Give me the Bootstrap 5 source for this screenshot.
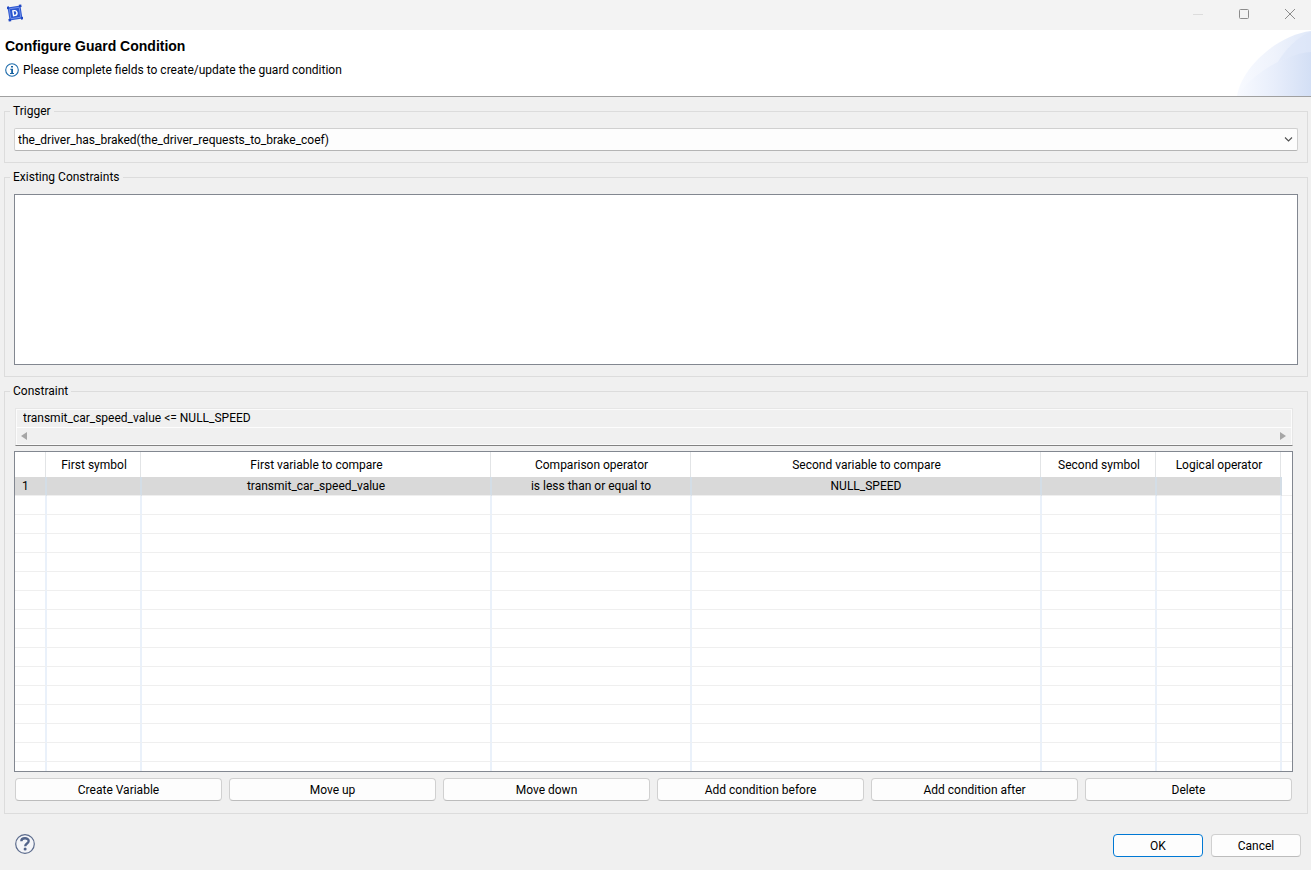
<!DOCTYPE html>
<html lang="en">
<head>
<meta charset="utf-8">
<meta name="viewport" content="width=device-width, initial-scale=1">
<title>Configure Guard Condition</title>
<link href="https://cdn.jsdelivr.net/npm/bootstrap@5.3.0/dist/css/bootstrap.min.css" rel="stylesheet">
<style>
  body { background: #f0f0f0; color: #000; font: 12px/16px Roboto, "Noto Sans", sans-serif; }
  .title-bar { background: #f3f3f3; height: 30px; padding-left: 7px; }
  .win-btn { width: 46px; height: 28px; color: #8c8c8c; }
  .win-btns { margin-right: -2px; }
  .win-btn:disabled { color: #dcdcdc; opacity: 1; border: 0; }
  .banner { background: #fff; height: 67px; border-bottom: 1px solid #a0a0a0; padding: 7px 0 0 5px; }
  .banner h1 { font: bold 14px/18px "Liberation Sans", Arial, sans-serif; margin-bottom: 7px; }
  .swoosh { right: 0; bottom: 0; }
  .main-area { padding-top: 6px; }
  .group-box { border: 1px solid #dcdcdc; margin: 0 3px 6px 4px; padding: 0 9px 11px; min-width: 0; }
  .group-box legend { font-size: 12px; line-height: 16px; padding: 0 3px; margin: 0 0 0 -4px; }
  .group-wide { padding: 0 14px 12px 9px; }
  .combo { height: 23px; border: 1px solid #d0d0d0; border-bottom-color: #b4b4b4; border-radius: 2px; background-color: #fdfdfd; color: #000; font-size: 12px; line-height: 16px; padding: 0 24px 0 3px; margin-top: 9px;
    background-image: url("data:image/svg+xml,%3csvg xmlns='http://www.w3.org/2000/svg' viewBox='0 0 8 5'%3e%3cpath d='M.5.5 4 4 7.5.5' fill='none' stroke='%23505050' stroke-width='1.1'/%3e%3c/svg%3e"); background-position: right 4px center; background-size: 9px 5px; }
  .constraint-list { height: 171px; border: 1px solid #828790; border-radius: 0; resize: none; margin-top: 9px; background: #fff; }
  .expression { margin: 9px 0 5px 1px; border: 1px solid #e6e6e6; border-bottom-color: #828282; box-shadow: inset 0 0 0 1px #fbfbfb; }
  .expression input { height: 19px; border: 0; border-bottom: 1px solid #fdfdfd; border-radius: 0; background: transparent; color: #000; font-size: 12px; line-height: 16px; padding: 0 7px; }
  .scroll-strip { height: 17px; padding: 0 5px 1px 4px; color: #a6a6a6; }
  .grid-frame { border: 1px solid #828790; background: #fff; overflow: auto; }
  .cond-grid { table-layout: fixed; width: 100%; border-collapse: separate; border-spacing: 0; text-align: center; }
  .cond-grid th { height: 25px; padding: 1px 0 0; font-weight: 400; border-right: 1px solid #fff; box-shadow: inset -1px 0 #e2e4e6; }
  .cond-grid td { height: 19px; padding: 0; line-height: 18px; border-right: 2px solid #eaf1fa; border-bottom: 1px solid #efefef; white-space: nowrap; }
  .cond-grid th:last-child, .cond-grid td:last-child { border-right: 0; box-shadow: none; }
  .cond-grid .picked td:not(:last-child) { background: #d9d9d9; border-right-color: #d3dde6; }
  .cond-grid .picked td:first-child { text-align: left; padding-left: 7px; }
  .cond-grid .cut td { height: 9px; border-bottom: 0; }
  .button-row { gap: 7px; margin: 6px 1px 0; }
  .dlg-btn { --bs-btn-color: #000; --bs-btn-bg: #fdfdfd; --bs-btn-border-color: #d0d0d0; --bs-btn-hover-color: #000; --bs-btn-hover-bg: #e5f1fb; --bs-btn-hover-border-color: #0078d4; --bs-btn-border-radius: 4px; --bs-btn-padding-x: 6px; --bs-btn-padding-y: 0px; --bs-btn-font-size: 12px; --bs-btn-line-height: 16px; height: 23px; border-bottom-color: #bcbcbc; }
  .dlg-btn.is-default { border-color: #0078d4; }
  .dlg-footer { padding: 14px 10px 13px 15px; gap: 8px; }
  .dlg-footer .dlg-btn { width: 90px; }
</style>
</head>
<body>
<div class="d-flex flex-column min-vh-100">
  <header>
    <div class="title-bar d-flex align-items-start">
      <svg class="mt-1" width="16" height="18" viewBox="0 -1 16 18" aria-hidden="true">
        <g transform="rotate(-9 8 8)">
          <rect x="1.500" y="1.500" width="13" height="13" fill="#2c56d0"/>
          <rect x="3" y="3" width="10" height="10" fill="none" stroke="#86a3f0" stroke-width=".7"/>
          <g fill="#2048c4"><rect x=".5" y=".5" width="2.500" height="2.500"/><rect x="13" y=".5" width="2.500" height="2.500"/><rect x=".5" y="13" width="2.500" height="2.500"/><rect x="13" y="13" width="2.500" height="2.500"/></g>
          <path d="M6.200 5.600h1.600a2.200 2.400 0 0 1 0 4.800H6.200z" fill="none" stroke="#fff" stroke-width="1.400"/>
        </g>
      </svg>
      <div class="win-btns ms-auto d-flex">
        <button type="button" class="win-btn btn p-0 border-0 rounded-0 d-flex align-items-center justify-content-center" disabled aria-label="Minimize"><svg width="10" height="10" aria-hidden="true"><path d="M0 5.500h10" stroke="currentColor"/></svg></button>
        <button type="button" class="win-btn btn p-0 border-0 rounded-0 d-flex align-items-center justify-content-center" aria-label="Maximize"><svg width="12" height="12" viewBox="0 0 12 12" aria-hidden="true"><rect x="1.500" y="1.500" width="9" height="9" rx="1" fill="none" stroke="currentColor"/></svg></button>
        <button type="button" class="win-btn btn p-0 border-0 rounded-0 d-flex align-items-center justify-content-center" aria-label="Close"><svg width="12" height="12" viewBox="0 0 12 12" aria-hidden="true"><path d="M1 1l10 10M11 1l-10 10" stroke="currentColor"/></svg></button>
      </div>
    </div>
    <div class="banner position-relative">
      <h1>Configure Guard Condition</h1>
      <div class="d-flex align-items-center gap-1">
        <svg width="14" height="14" viewBox="0 0 14 14" aria-hidden="true"><circle cx="7" cy="7" r="6.300" fill="#fff" stroke="#1f6cab" stroke-width="1.100"/><path d="M6 3h2v1.500H6zM5.200 5.700H8v4.200h1v1H5v-1h1.200V6.700h-1z" fill="#14609f"/></svg>
        <span>Please complete fields to create/update the guard condition</span>
      </div>
      <svg class="swoosh position-absolute" width="74" height="66" viewBox="0 0 74 66" aria-hidden="true">
        <defs>
          <linearGradient id="fadeA"><stop offset="0" stop-color="#f8faff"/><stop offset=".5" stop-color="#eff3fc"/><stop offset="1" stop-color="#dfe8f9"/></linearGradient>
          <linearGradient id="fadeB"><stop offset="0" stop-color="#f8faff"/><stop offset=".5" stop-color="#e8eefb"/><stop offset="1" stop-color="#d3dff5"/></linearGradient>
        </defs>
        <path d="M0 66C4 38 40 5 74 1V66z" fill="url(#fadeA)"/>
        <path d="M41 32C48 20 60 7 74 2V22Q56 24 41 32z" fill="#d9e4f8" opacity=".5"/>
        <path d="M0 66C12 48 44 24 74 22V66z" fill="url(#fadeB)"/>
      </svg>
    </div>
  </header>

  <main class="main-area">
    <fieldset class="group-box">
      <legend class="float-none w-auto"><label for="trigger">Trigger</label></legend>
      <select id="trigger" class="form-select combo">
        <option>the_driver_has_braked(the_driver_requests_to_brake_coef)</option>
      </select>
    </fieldset>

    <fieldset class="group-box">
      <legend class="float-none w-auto"><label for="existing">Existing Constraints</label></legend>
      <textarea id="existing" class="form-control constraint-list" readonly></textarea>
    </fieldset>

    <fieldset class="group-box group-wide">
      <legend class="float-none w-auto"><label for="expression">Constraint</label></legend>
      <div class="expression">
        <input id="expression" class="form-control" type="text" readonly value="transmit_car_speed_value &lt;= NULL_SPEED">
        <div class="scroll-strip d-flex justify-content-between align-items-center" aria-hidden="true">
          <svg width="8" height="8"><path d="M7 0v8L1 4z" fill="currentColor"/></svg>
          <svg width="8" height="8"><path d="M1 0v8l6-4z" fill="currentColor"/></svg>
        </div>
      </div>
      <div class="grid-frame">
        <table class="cond-grid">
          <colgroup><col width="32"><col width="95"><col width="350"><col width="200"><col width="350"><col width="115"><col width="125"><col></colgroup>
          <thead>
            <tr><th></th><th scope="col">First symbol</th><th scope="col">First variable to compare</th><th scope="col">Comparison operator</th><th scope="col">Second variable to compare</th><th scope="col">Second symbol</th><th scope="col">Logical operator</th><th></th></tr>
          </thead>
          <tbody id="conditions">
            <tr class="picked"><td>1</td><td></td><td>transmit_car_speed_value</td><td>is less than or equal to</td><td>NULL_SPEED</td><td></td><td></td><td></td></tr>
          </tbody>
        </table>
      </div>
      <div class="button-row d-flex">
        <button type="button" class="btn dlg-btn flex-fill w-100">Create Variable</button>
        <button type="button" class="btn dlg-btn flex-fill w-100">Move up</button>
        <button type="button" class="btn dlg-btn flex-fill w-100">Move down</button>
        <button type="button" class="btn dlg-btn flex-fill w-100">Add condition before</button>
        <button type="button" class="btn dlg-btn flex-fill w-100">Add condition after</button>
        <button type="button" class="btn dlg-btn flex-fill w-100">Delete</button>
      </div>
    </fieldset>
  </main>

  <footer class="dlg-footer d-flex align-items-start mt-auto">
    <button type="button" class="btn p-0 border-0 me-auto d-flex" aria-label="Help">
      <svg width="20" height="20" viewBox="0 0 20 20" aria-hidden="true"><circle cx="10" cy="10" r="9.300" fill="#f4f5f8" stroke="#5b6b8c" stroke-width="1.200"/><path d="M6.300 7.200C6.300 3.300 13.700 3.300 13.700 7c0 2.600-3.500 2.500-3.500 5.300" fill="none" stroke="#52648a" stroke-width="2.300"/><circle cx="10.100" cy="15" r="1.500" fill="#52648a"/></svg>
    </button>
    <button type="button" class="btn dlg-btn is-default">OK</button>
    <button type="button" class="btn dlg-btn">Cancel</button>
  </footer>
</div>
<script>
  const body = document.getElementById('conditions');
  for (let i = 0; i < 15; i++) {
    const row = body.insertRow();
    for (let c = 0; c < 8; c++) row.insertCell();
    if (i === 14) row.className = 'cut';
  }
</script>
<script src="https://cdn.jsdelivr.net/npm/bootstrap@5.3.0/dist/js/bootstrap.bundle.min.js"></script>
</body>
</html>
